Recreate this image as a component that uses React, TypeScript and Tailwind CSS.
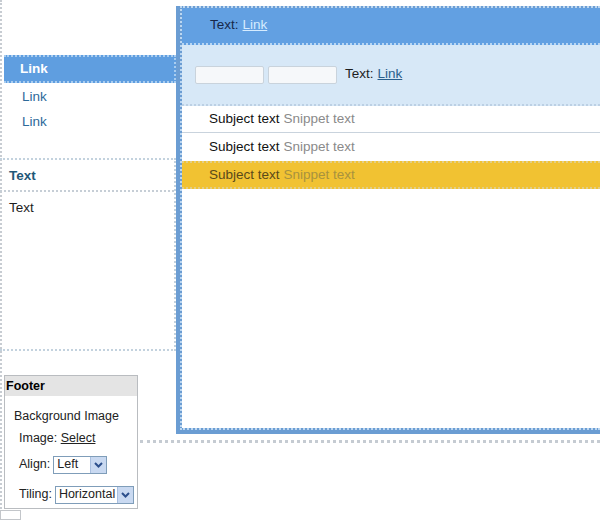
import React from "react";

function Chevron() {
  return (
    <div className="w-[16px] self-stretch bg-[#c9d9f1] border-l border-[#a9bfdf] flex items-center justify-center">
      <svg width="9" height="6" viewBox="0 0 9 6">
        <path d="M1 1 L4.5 4.5 L8 1" fill="none" stroke="#2c4f8c" strokeWidth="2" />
      </svg>
    </div>
  );
}

export default function App() {
  return (
    <div
      className="relative w-[600px] h-[520px] overflow-hidden bg-white flex text-[13.5px] text-[#1e1e1e]"
      style={{ fontFamily: '"Liberation Sans", Arial, sans-serif' }}
    >
      {/* Left column */}
      <div className="w-[176px] shrink-0 flex flex-col border-l-2 border-dotted border-[#c7ccd2]">
        {/* Nav */}
        <div className="mt-[55px] flex flex-col">
          <div className="h-[28px] bg-[#5f9ee0] border-y-2 border-r-2 border-dotted border-[#a9cdf0] ml-[2px] pl-[16px] flex items-center font-bold text-white">
            Link
          </div>
          <div className="h-[27px] pt-[1px] pl-[20px] flex items-center text-[#2d6a9a]">Link</div>
          <div className="h-[24px] pl-[20px] flex items-center text-[#2d6a9a]">Link</div>
        </div>
        {/* Sidebar box */}
        <div className="mt-[24px] h-[197px] ml-[-2px] border-y-2 border-r-2 border-dotted border-[#c3d2de] flex flex-col">
          <div className="h-[32px] pt-[2px] pl-[9px] flex items-center font-bold text-[#1f5878] border-b-2 border-dotted border-[#c6ced6]">
            Text
          </div>
          <div className="pl-[9px] pt-[6px]">Text</div>
        </div>
        {/* Footer panel */}
        <div className="mt-[24px] ml-[2px] w-[134px] h-[137px] border border-[#b9bcc0] bg-white flex flex-col text-[12.5px]">
          <div className="h-[20px] bg-[#e4e4e4] pl-[1px] flex items-center font-bold text-black">Footer</div>
          <div className="pl-[9px] pt-[11px] text-[#222]">Background Image</div>
          <div className="pl-[14px] pt-[3px] text-[#222]">
            Image: <span className="underline text-[#222]">Select</span>
          </div>
          <div className="pl-[14px] pt-[8px] flex items-center gap-[3px] text-[#222]">
            <span>Align:</span>
            <div className="w-[54px] h-[18px] border border-[#7f9db9] flex items-center bg-white">
              <span className="flex-1 pl-[3px]">Left</span>
              <Chevron />
            </div>
          </div>
          <div className="pl-[14px] pt-[11px] flex items-center gap-[3px] text-[#222]">
            <span>Tiling:</span>
            <div className="w-[79px] h-[18px] border border-[#7f9db9] flex items-center bg-white">
              <span className="flex-1 pl-[3px]">Horizontal</span>
              <Chevron />
            </div>
          </div>
        </div>
        <div className="mt-[1px] ml-[-2px] w-[21px] h-[10px] border border-[#c3c6ca] bg-white" />
      </div>

      {/* Right column */}
      <div className="flex-1 flex flex-col">
        <div className="mt-[6px] h-[428px] bg-[#6b9dd3] pl-[4px] pb-[4px] flex flex-col">
          <div className="flex-1 flex flex-col border-l-2 border-t-2 border-b-2 border-dotted border-[#bcd7f1] bg-[#6b9dd3]">
            {/* Header */}
            <div className="h-[37px] bg-[#62a0e2] border-b-2 border-dotted border-[#b8d6f3] pl-[28px] flex items-center">
              <span className="text-[#17284a]">Text:</span>
              <span className="ml-[4px] underline text-[#d6ecff]">Link</span>
            </div>
            {/* Toolbar */}
            <div className="h-[61px] bg-[#d7e8f7] border-b-2 border-dotted border-[#bcd0e4] pl-[13px] flex items-center">
              <div className="w-[69px] h-[18px] bg-[#f6f8fa] border border-[#c9d3dc] rounded-[2px]" />
              <div className="ml-[4px] w-[69px] h-[18px] bg-[#f6f8fa] border border-[#c9d3dc] rounded-[2px]" />
              <span className="ml-[8px] text-[#1e1e1e]">Text:</span>
              <span className="ml-[4px] underline text-[#2a5f8c]">Link</span>
            </div>
            {/* List */}
            <div className="flex-1 bg-white flex flex-col">
              <div className="h-[27px] pl-[27px] flex items-center border-b border-[#c9d3dd]">
                <span className="text-[#111]">Subject text</span>
                <span className="ml-[4px] text-[#8a8a8a]">Snippet text</span>
              </div>
              <div className="h-[28px] pl-[27px] flex items-center">
                <span className="text-[#111]">Subject text</span>
                <span className="ml-[4px] text-[#8a8a8a]">Snippet text</span>
              </div>
              <div className="h-[28px] pl-[27px] flex items-center bg-[#f1c232] border-y-2 border-dotted border-[#e3ce86]">
                <span className="text-[#5a4a1a]">Subject text</span>
                <span className="ml-[4px] text-[#a8923e]">Snippet text</span>
              </div>
            </div>
          </div>
        </div>
        <div className="mt-[6px] ml-[-36px] border-t-[3px] border-dotted border-[#c5cbd2]" />
      </div>
    </div>
  );
}
